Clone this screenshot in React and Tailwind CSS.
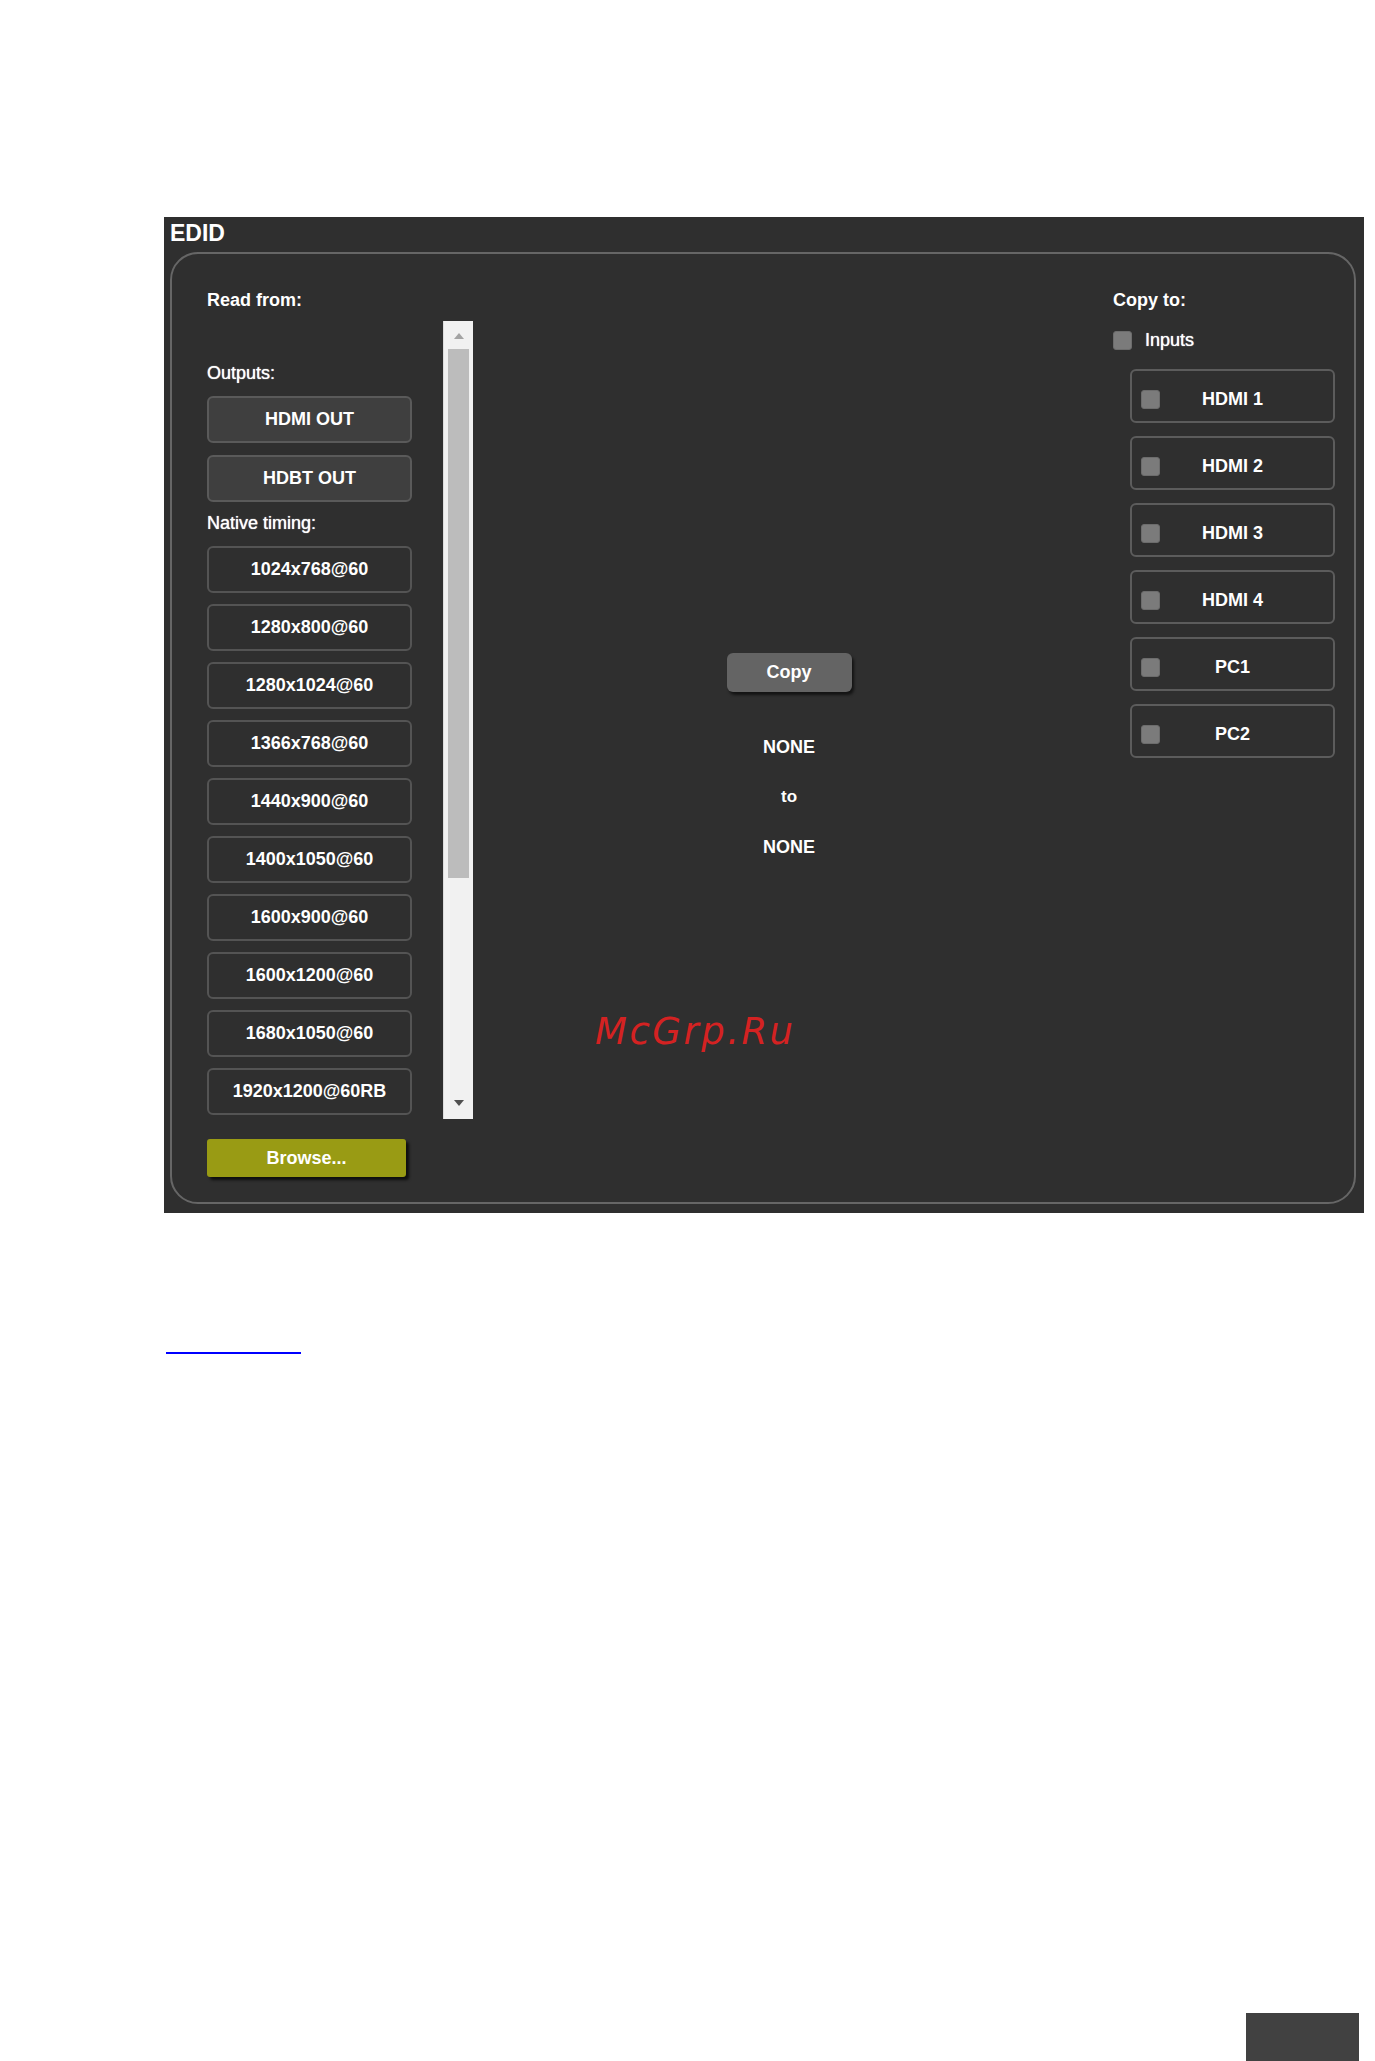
const timings = [
  '1024x768@60',
  '1280x800@60',
  '1280x1024@60',
  '1366x768@60',
  '1440x900@60',
  '1400x1050@60',
  '1600x900@60',
  '1600x1200@60',
  '1680x1050@60',
  '1920x1200@60RB',
];

const targets = ['HDMI 1', 'HDMI 2', 'HDMI 3', 'HDMI 4', 'PC1', 'PC2'];

function Checkbox() {
  return <div className="h-[19px] w-[19px] rounded-[3px] border border-[#6c6c6c] bg-[#7b7b7b]" />;
}

function Scrollbar() {
  return (
    <div className="flex h-[798px] w-[30px] shrink-0 flex-col items-center border-l border-[#dcdcdc] bg-[#f1f1f1] pt-[12px] pb-[13px]">
      <svg width="10" height="6" viewBox="0 0 10 6">
        <path d="M0 6 L5 0 L10 6 Z" fill="#a3a3a3" />
      </svg>
      <div className="mt-[10px] h-[529px] w-[21px] bg-[#bcbcbc]" />
      <svg className="mt-auto" width="10" height="6" viewBox="0 0 10 6">
        <path d="M0 0 L10 0 L5 6 Z" fill="#505050" />
      </svg>
    </div>
  );
}

export default function App() {
  return (
    <div className="relative flex min-h-[2061px] flex-col bg-white font-['Liberation_Sans',Arial,sans-serif] text-white">
      <div className="ml-[164px] mt-[217px] w-[1200px] bg-[#2f2f2f] pb-[9px] pl-[6px] pr-[8px] pt-[3px]">
        <h1 className="text-[23px] font-bold leading-[26px]">EDID</h1>

        <div className="mt-[6px] flex h-[952px] rounded-[28px] border-2 border-[#666666]">
          {/* read from */}
          <div className="w-[301px] shrink-0 pl-[35px] pt-[36px]">
            <div className="text-[18px] font-bold leading-[20px]">Read from:</div>
            <div className="mt-[11px] flex gap-[31px]">
              <div className="w-[205px] pt-[42px]">
                <div className="text-[18px] leading-[20px] [text-shadow:0_0_1px_#fff]">Outputs:</div>
                <button className="mt-[13px] flex h-[47px] w-full items-center justify-center rounded-[6px] border-2 border-[#5a5a5a] bg-[#3f3f3f] text-[18px] font-bold">
                  HDMI OUT
                </button>
                <button className="mt-[12px] flex h-[47px] w-full items-center justify-center rounded-[6px] border-2 border-[#5a5a5a] bg-[#3f3f3f] text-[18px] font-bold">
                  HDBT OUT
                </button>
                <div className="mt-[11px] text-[18px] leading-[20px] [text-shadow:0_0_1px_#fff]">Native timing:</div>
                <div className="mt-[13px] flex flex-col gap-[11px]">
                  {timings.map((t) => (
                    <button
                      key={t}
                      className="flex h-[47px] w-full items-center justify-center rounded-[6px] border-2 border-[#545454] bg-[#2f2f2f] text-[18px] font-bold"
                    >
                      {t}
                    </button>
                  ))}
                </div>
              </div>
              <Scrollbar />
            </div>
            <button className="mt-[20px] flex h-[38px] w-[199px] items-center justify-center rounded-[3px] bg-[#999b14] text-[18px] font-bold shadow-[3px_3px_3px_rgba(0,0,0,0.7)]">
              Browse...
            </button>
          </div>

          {/* copy */}
          <div className="flex flex-1 flex-col items-center pr-[8px] pt-[399px]">
            <button className="flex h-[39px] w-[125px] items-center justify-center rounded-[6px] bg-[#646464] text-[18px] font-bold shadow-[2px_3px_3px_rgba(0,0,0,0.6)]">
              Copy
            </button>
            <div className="mt-[45px] text-[18px] font-bold leading-[20px]">NONE</div>
            <div className="mt-[30px] text-[17px] font-bold leading-[20px]">to</div>
            <div className="mt-[30px] text-[18px] font-bold leading-[20px]">NONE</div>
          </div>

          {/* copy to */}
          <div className="mr-[19px] w-[222px] shrink-0 pt-[36px]">
            <div className="text-[18px] font-bold leading-[20px]">Copy to:</div>
            <div className="mt-[20px] flex items-center gap-[13px]">
              <Checkbox />
              <span className="text-[18px] leading-[20px] [text-shadow:0_0_1px_#fff]">Inputs</span>
            </div>
            <div className="ml-[17px] mt-[19px] flex flex-col gap-[13px]">
              {targets.map((t) => (
                <div
                  key={t}
                  className="grid h-[54px] w-[205px] grid-cols-[19px_1fr_19px] items-center rounded-[6px] border-2 border-[#5c5c5c] px-[9px] pt-[7px]"
                >
                  <Checkbox />
                  <span className="text-center text-[18px] font-bold">{t}</span>
                  <span />
                </div>
              ))}
            </div>
          </div>
        </div>
      </div>

      <div className="ml-[166px] mt-[139px] h-[2px] w-[135px] bg-[#0000ff]" />

      <div className="mr-[16px] mt-auto h-[48px] w-[113px] self-end bg-[#414141]" />

      <div className="absolute left-[595px] top-[1013px] font-['DejaVu_Sans',sans-serif] text-[37px] italic leading-[37px] tracking-[2.5px] text-[#d42222]">
        McGrp.Ru
      </div>
    </div>
  );
}
